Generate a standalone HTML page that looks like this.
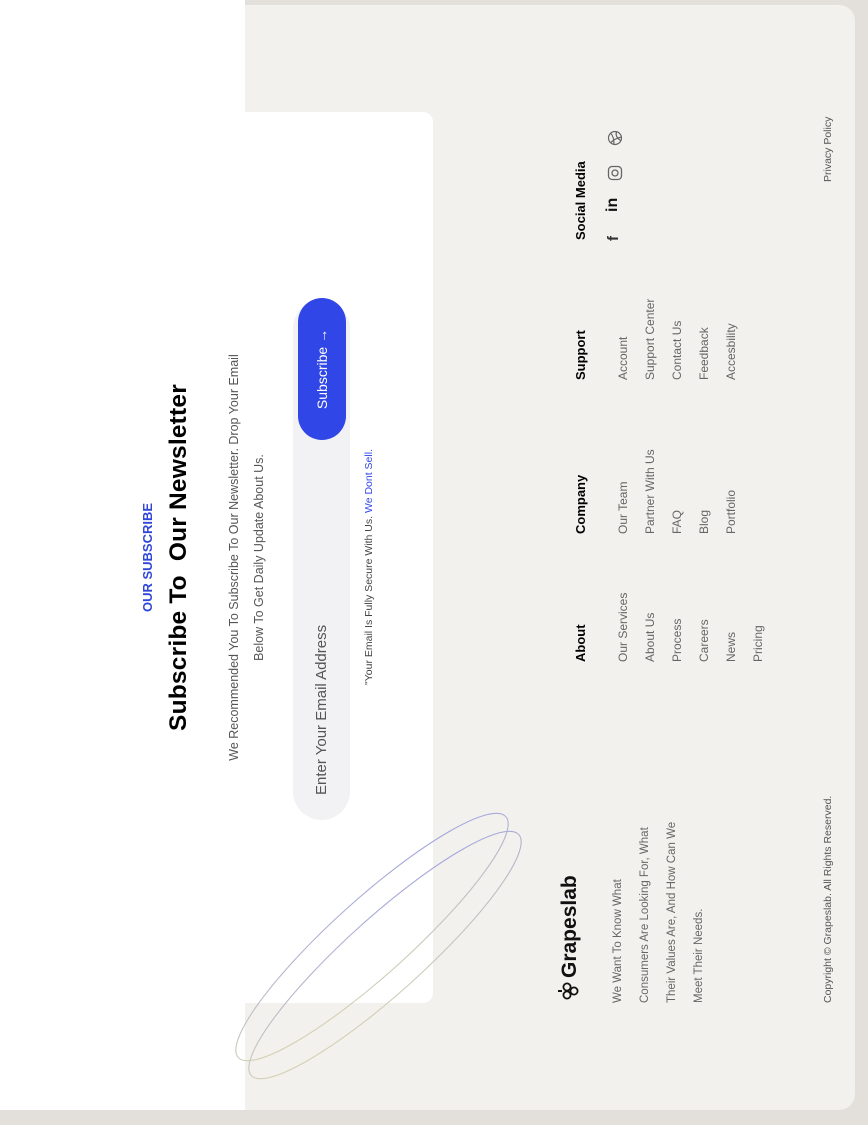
<!DOCTYPE html>
<html><head><meta charset="utf-8">
<style>
html,body{margin:0;padding:0;width:868px;height:1125px;overflow:hidden;background:#e3e0dc;}
#r{position:absolute;left:0;top:0;width:1125px;height:868px;transform-origin:0 0;transform:translateY(1125px) rotate(-90deg);font-family:"Liberation Sans",sans-serif;background:#e3e0dc;}
.abs{position:absolute;}
#panel{left:15px;top:0;width:1105px;height:855px;background:#f3f1ed;border-radius:0 0 16px 16px;}
#white{left:15px;top:0;width:1110px;height:245px;background:#fff;}
#card{left:122px;top:0;width:891px;height:433px;background:#fff;border-radius:0 0 10px 10px;}
.c{left:122px;width:891px;text-align:center;}
.tag{top:140px;font-size:13px;font-weight:bold;color:#2f46d8;}
h1{margin:0;top:165px;font-size:24.5px;font-weight:bold;color:#000;letter-spacing:0.2px;}
.p{top:222px;font-size:12.5px;line-height:25px;color:#555;}
#input{left:305px;top:293px;width:520px;height:57px;background:#f2f2f4;border-radius:29px;}
#ph{left:330px;top:313px;font-size:15px;color:#555;}
#btn{left:685px;top:298px;width:142px;height:48px;background:#3146e6;border-radius:24px;color:#fff;font-size:14px;line-height:48px;text-align:center;}
#note{left:440px;top:363px;font-size:10.5px;color:#444;white-space:nowrap;}
#note span{color:#3146e6;}
.logo{left:125px;top:557px;font-size:21px;font-weight:bold;color:#111;}
.desc{left:122px;top:605px;font-size:11.5px;line-height:27px;color:#666;white-space:nowrap;}
.col{top:573px;}
.col b{display:block;font-size:13px;color:#000;height:37px;}
.col div{font-size:12px;color:#666;line-height:27px;}
.small{top:822px;font-size:10.5px;color:#555;}
</style></head><body>
<div id="r">
<div class="abs" id="panel"></div>
<div class="abs" id="white"></div>
<div class="abs" id="card"></div>
<div class="abs c tag">OUR SUBSCRIBE</div>
<h1 class="abs c">Subscribe To &nbsp;Our Newsletter</h1>
<div class="abs c p">We Recommended You To Subscribe To Our Newsletter. Drop Your Email<br>Below To Get Daily Update About Us.</div>
<div class="abs" id="input"></div>
<div class="abs" id="ph">Enter Your Email Address</div>
<div class="abs" id="btn">Subscribe &rarr;</div>
<div class="abs" id="note">"Your Email Is Fully Secure With Us. <span>We Dont Sell.</span></div>
<svg class="abs" style="left:0;top:0" width="1125" height="868">
<defs><linearGradient id="g" x1="0" y1="1" x2="1" y2="0"><stop offset="0" stop-color="#dedaa8"/><stop offset="1" stop-color="#9a9ee4"/></linearGradient></defs>
<ellipse cx="170" cy="385" rx="180" ry="38" transform="rotate(48 170 385)" fill="none" stroke="url(#g)" stroke-width="1.1"/>
<ellipse cx="188" cy="372" rx="180" ry="38" transform="rotate(48 188 372)" fill="none" stroke="url(#g)" stroke-width="1.1"/>
</svg>
<div class="abs logo"><svg width="18" height="22" viewBox="0 0 18 22" style="vertical-align:-3px;margin-right:4px"><circle cx="5" cy="10" r="3.6" fill="none" stroke="#111" stroke-width="1.8"/><circle cx="13" cy="10" r="3.6" fill="none" stroke="#111" stroke-width="1.8"/><circle cx="9" cy="17" r="3.6" fill="none" stroke="#111" stroke-width="1.8"/><rect x="8" y="1" width="2" height="4" fill="#111"/></svg>Grapeslab</div>
<div class="abs desc">We Want To Know What<br>Consumers Are Looking For, What<br>Their Values Are, And How Can We<br>Meet Their Needs.</div>
<div class="abs col" style="left:463px"><b>About</b><div>Our Services</div><div>About Us</div><div>Process</div><div>Careers</div><div>News</div><div>Pricing</div></div>
<div class="abs col" style="left:591px"><b>Company</b><div>Our Team</div><div>Partner With Us</div><div>FAQ</div><div>Blog</div><div>Portfolio</div></div>
<div class="abs col" style="left:745px"><b>Support</b><div>Account</div><div>Support Center</div><div>Contact Us</div><div>Feedback</div><div>Accesbility</div></div>
<div class="abs col" style="left:885px"><b>Social Media</b></div>
<div class="abs" style="left:884px;top:605px;font-size:15px;font-weight:bold;color:#333">f</div>
<div class="abs" style="left:913px;top:604px;font-size:16px;font-weight:bold;color:#111">in</div>
<svg class="abs" style="left:944px;top:607px" width="16" height="16" viewBox="0 0 16 16"><rect x="1.5" y="1.5" width="13" height="13" rx="3.5" fill="none" stroke="#666" stroke-width="1.3"/><circle cx="8" cy="8" r="3" fill="none" stroke="#666" stroke-width="1.3"/></svg>
<svg class="abs" style="left:979px;top:607px" width="16" height="16" viewBox="0 0 16 16" fill="none" stroke="#666" stroke-width="1.2"><circle cx="8" cy="8" r="6.5"/><path d="M3 3.5c3 2.5 5 6 6 11M13 3.5c-2.5 2.5-6 3.5-11.3 3.5M14.5 9.5c-3-1-6-.5-9 4"/></svg>
<div class="abs small" style="left:122px">Copyright © Grapeslab. All Rights Reserved.</div>
<div class="abs small" style="left:943px">Privacy Policy</div>
</div>
</body></html>
